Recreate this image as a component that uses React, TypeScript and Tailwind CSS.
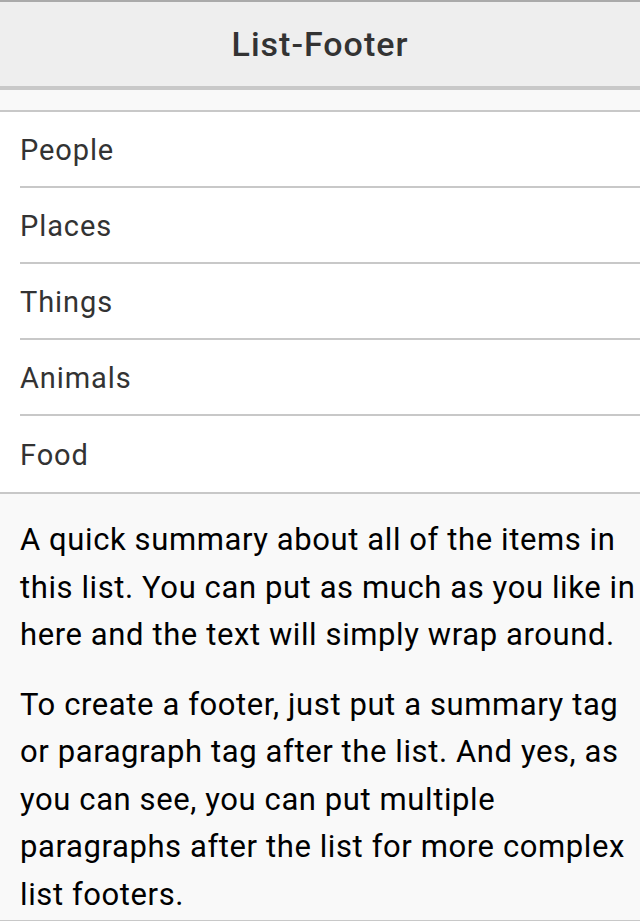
const ITEMS = ["People", "Places", "Things", "Animals", "Food"];

export default function App() {
  return (
    <div className="min-h-[921px] bg-[#f9f9f9] font-['Roboto',sans-serif] text-[#333]">
      {/* Title bar */}
      <header className="h-[90px] border-t-2 border-b-4 border-[#c8c8c8] border-t-[#aaa] bg-[#eeeeee] flex items-center justify-center">
        <h1 className="text-[34px] font-medium tracking-[1px] text-[#333]">List-Footer</h1>
      </header>

      <div className="h-[20px]" />

      {/* List */}
      <ul className="bg-white border-t-2 border-b-2 border-[#c8c8c8]">
        {ITEMS.map((item, idx) => (
          <li key={item} className="pl-[20px]">
            <div
              className={`h-[76px] flex items-center pt-[4px] text-[29px] tracking-[0.9px] ${
                idx < ITEMS.length - 1 ? "border-b-2 border-[#c8c8c8]" : ""
              }`}
            >
              {item}
            </div>
          </li>
        ))}
      </ul>

      {/* Footer */}
      <div className="pl-[20px] pr-[1px] pt-[22px] pb-[2px] text-[31px] tracking-[0.6px] leading-[47.5px] text-black border-b-2 border-[#c8c8c8]">
        <p>
          A quick summary about all of the items in this list. You can put as
          much as you like in here and the text will simply wrap around.
        </p>
        <p className="mt-[22px]">
          To create a footer, just put a summary tag or paragraph tag after the
          list. And yes, as you can see, you can put multiple paragraphs after
          the list for more complex list footers.
        </p>
      </div>
    </div>
  );
}
